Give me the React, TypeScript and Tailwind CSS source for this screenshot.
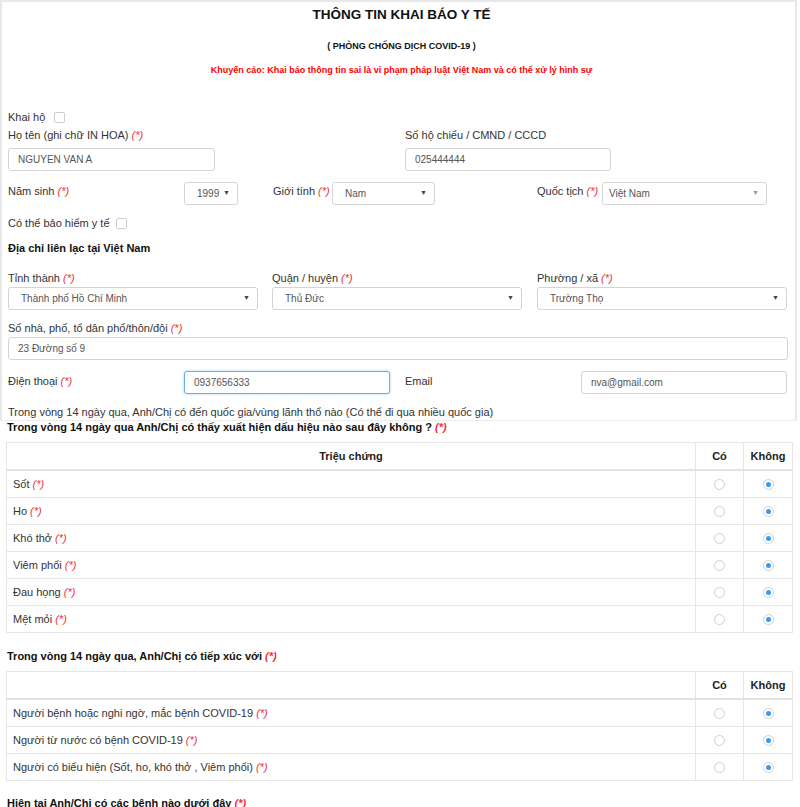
import React from "react";

const Req = ({ bold = false }: { bold?: boolean }) => (
  <span className={`italic text-[#f0303c] ${bold ? "font-bold" : ""}`}> (*)</span>
);

const Check = () => (
  <span className="inline-block w-[11px] h-[11px] border border-[#cfcfcf] rounded-[2px] bg-white align-middle" />
);

const Input = ({ value, w, focus = false }: { value: string; w: string; focus?: boolean }) => (
  <div
    className={`${w} h-[23px] flex items-center rounded-[3px] border bg-white text-[10px] text-[#555] ${
      focus ? "border-[#66afe9] shadow-[0_0_3px_rgba(102,175,233,0.6)]" : "border-[#d4d4d4]"
    }`}
  >
    <span className="pl-[9px]">{value}</span>
  </div>
);

const Select = ({
  value,
  w,
  pl = "pl-[12px]",
  arrow = "text-[#444]",
}: {
  value: string;
  w: string;
  pl?: string;
  arrow?: string;
}) => (
  <div
    className={`${w} h-[23px] flex items-center justify-between rounded-[3px] border border-[#d4d4d4] bg-white text-[10px] text-[#555]`}
  >
    <span className={pl}>{value}</span>
    <span className={`pr-[7px] text-[7px] ${arrow}`}>▼</span>
  </div>
);

const Radio = ({ checked }: { checked: boolean }) => (
  <span className="inline-flex w-[11px] h-[11px] rounded-full border border-[#d0d0d0] bg-white items-center justify-center">
    {checked && <span className="w-[5px] h-[5px] rounded-full bg-[#3b9af0]" />}
  </span>
);

const Row = ({ label }: { label: string }) => (
  <div className="flex h-[27px] border-b border-[#e6e6e6]">
    <div className="flex-1 flex items-center pl-[6px] text-[11px] text-[#333] border-r border-[#e6e6e6]">
      <span>
        {label}
        <Req />
      </span>
    </div>
    <div className="w-[48px] flex items-center justify-center border-r border-[#e6e6e6]">
      <Radio checked={false} />
    </div>
    <div className="w-[48px] flex items-center justify-center">
      <Radio checked={true} />
    </div>
  </div>
);

const TableHead = ({ title }: { title: string }) => (
  <div className="flex h-[28px] border-b-2 border-[#e3e3e3] text-[11px] font-bold text-[#222]">
    <div className="flex-1 flex items-center justify-center border-r border-[#e6e6e6]">{title}</div>
    <div className="w-[48px] flex items-center justify-center border-r border-[#e6e6e6]">Có</div>
    <div className="w-[48px] flex items-center justify-center">Không</div>
  </div>
);

export default function App() {
  const symptoms = ["Sốt", "Ho", "Khó thở", "Viêm phổi", "Đau họng", "Mệt mỏi"];
  const contacts = [
    "Người bệnh hoặc nghi ngờ, mắc bệnh COVID-19",
    "Người từ nước có bệnh COVID-19",
    "Người có biểu hiện (Sốt, ho, khó thở , Viêm phổi)",
  ];
  return (
    <div
      className="w-[800px] min-h-[807px] bg-white text-[#333] overflow-hidden"
      style={{ fontFamily: '"Liberation Sans", Arial, sans-serif' }}
    >
      <div className="w-[797px] border-l-2 border-r-2 border-t-2 border-[#e8e8e8] border-b border-b-[#ececec] pl-[6px]">
        <div className="h-[20px] mt-[3px] leading-[20px] text-center text-[13.5px] font-bold text-[#111]">
          THÔNG TIN KHAI BÁO Y TẾ
        </div>
        <div className="h-[14px] mt-[14px] leading-[14px] text-center text-[9px] font-bold text-[#111]">
          ( PHÒNG CHỐNG DỊCH COVID-19 )
        </div>
        <div className="h-[14px] mt-[10px] leading-[14px] text-center text-[9px] font-bold text-[#ff0000]">
          Khuyến cáo: Khai báo thông tin sai là vi phạm pháp luật Việt Nam và có thể xử lý hình sự
        </div>

        <div className="h-[16px] mt-[32px] leading-[16px] text-[11px] flex items-center gap-[9px]">
          <span>Khai hộ</span>
          <Check />
        </div>

        <div className="flex mt-[2px]">
          <div className="w-[397px]">
            <div className="h-[16px] leading-[16px] text-[11px]">
              Họ tên (ghi chữ IN HOA)
              <Req />
            </div>
            <div className="mt-[5px]">
              <Input value="NGUYEN VAN A" w="w-[207px]" />
            </div>
          </div>
          <div>
            <div className="h-[16px] leading-[16px] text-[11px]">Số hộ chiếu / CMND / CCCD</div>
            <div className="mt-[5px]">
              <Input value="025444444" w="w-[206px]" />
            </div>
          </div>
        </div>

        <div className="flex mt-[11px] text-[11px]">
          <div className="w-[264px] flex">
            <div className="w-[176px] pt-[1px] leading-[16px]">
              Năm sinh
              <Req />
            </div>
            <Select value="1999" w="w-[54px]" />
          </div>
          <div className="w-[265px] flex">
            <div className="w-[60px] pt-[1px] leading-[16px] pl-[1px]">
              Giới tính
              <Req />
            </div>
            <Select value="Nam" w="w-[103px]" />
          </div>
          <div className="flex">
            <div className="w-[65px] pt-[1px] leading-[16px]">
              Quốc tịch
              <Req />
            </div>
            <Select value="Việt Nam" w="w-[165px]" pl="pl-[6px]" arrow="text-[#999]" />
          </div>
        </div>

        <div className="h-[16px] mt-[10px] leading-[16px] text-[11px] flex items-center gap-[6px]">
          <span>Có thể bảo hiểm y tế</span>
          <Check />
        </div>

        <div className="h-[16px] mt-[9px] leading-[16px] text-[11px] font-bold text-[#111]">
          Địa chỉ liên lạc tại Việt Nam
        </div>

        <div className="flex mt-[14px] text-[11px]">
          <div className="w-[264px]">
            <div className="h-[16px] leading-[16px]">
              Tỉnh thành
              <Req />
            </div>
            <div className="mt-[1px]">
              <Select value="Thành phố Hồ Chí Minh" w="w-[250px]" />
            </div>
          </div>
          <div className="w-[265px]">
            <div className="h-[16px] leading-[16px]">
              Quận / huyện
              <Req />
            </div>
            <div className="mt-[1px]">
              <Select value="Thủ Đức" w="w-[250px]" />
            </div>
          </div>
          <div>
            <div className="h-[16px] leading-[16px]">
              Phường / xã
              <Req />
            </div>
            <div className="mt-[1px]">
              <Select value="Trường Thọ" w="w-[250px]" />
            </div>
          </div>
        </div>

        <div className="h-[16px] mt-[10px] leading-[16px] text-[11px]">
          Số nhà, phố, tổ dân phố/thôn/đội
          <Req />
        </div>
        <div className="mt-[1px]">
          <Input value="23 Đường số 9" w="w-[780px]" />
        </div>

        <div className="flex mt-[11px] text-[11px]">
          <div className="w-[397px] flex">
            <div className="w-[176px] pt-[2px] leading-[16px]">
              Điện thoại
              <Req />
            </div>
            <Input value="0937656333" w="w-[206px]" focus />
          </div>
          <div className="flex">
            <div className="w-[176px] pt-[2px] leading-[16px]">Email</div>
            <Input value="nva@gmail.com" w="w-[206px]" />
          </div>
        </div>

        <div className="h-[16px] mt-[10px] leading-[16px] text-[11px]">
          Trong vòng 14 ngày qua, Anh/Chị có đến quốc gia/vùng lãnh thổ nào (Có thể đi qua nhiều quốc gia)
        </div>
      </div>

      <div className="pl-[7px] h-[13px] leading-[13px] text-[11px] font-bold text-[#111]">
        Trong vòng 14 ngày qua Anh/Chị có thấy xuất hiện dấu hiệu nào sau đây không ?
        <Req bold />
      </div>

      <div className="ml-[6px] w-[787px] mt-[8px] border-l border-r border-t border-[#e6e6e6]">
        <TableHead title="Triệu chứng" />
        {symptoms.map((s) => (
          <Row key={s} label={s} />
        ))}
      </div>

      <div className="pl-[7px] mt-[16px] h-[14px] leading-[14px] text-[11px] font-bold text-[#111]">
        Trong vòng 14 ngày qua, Anh/Chị có tiếp xúc với
        <Req bold />
      </div>

      <div className="ml-[6px] w-[787px] mt-[8px] border-l border-r border-t border-[#e6e6e6]">
        <TableHead title="" />
        {contacts.map((s) => (
          <Row key={s} label={s} />
        ))}
      </div>

      <div className="pl-[7px] mt-[15px] h-[14px] leading-[14px] text-[11px] font-bold text-[#111]">
        Hiện tại Anh/Chị có các bệnh nào dưới đây
        <Req bold />
      </div>
    </div>
  );
}
